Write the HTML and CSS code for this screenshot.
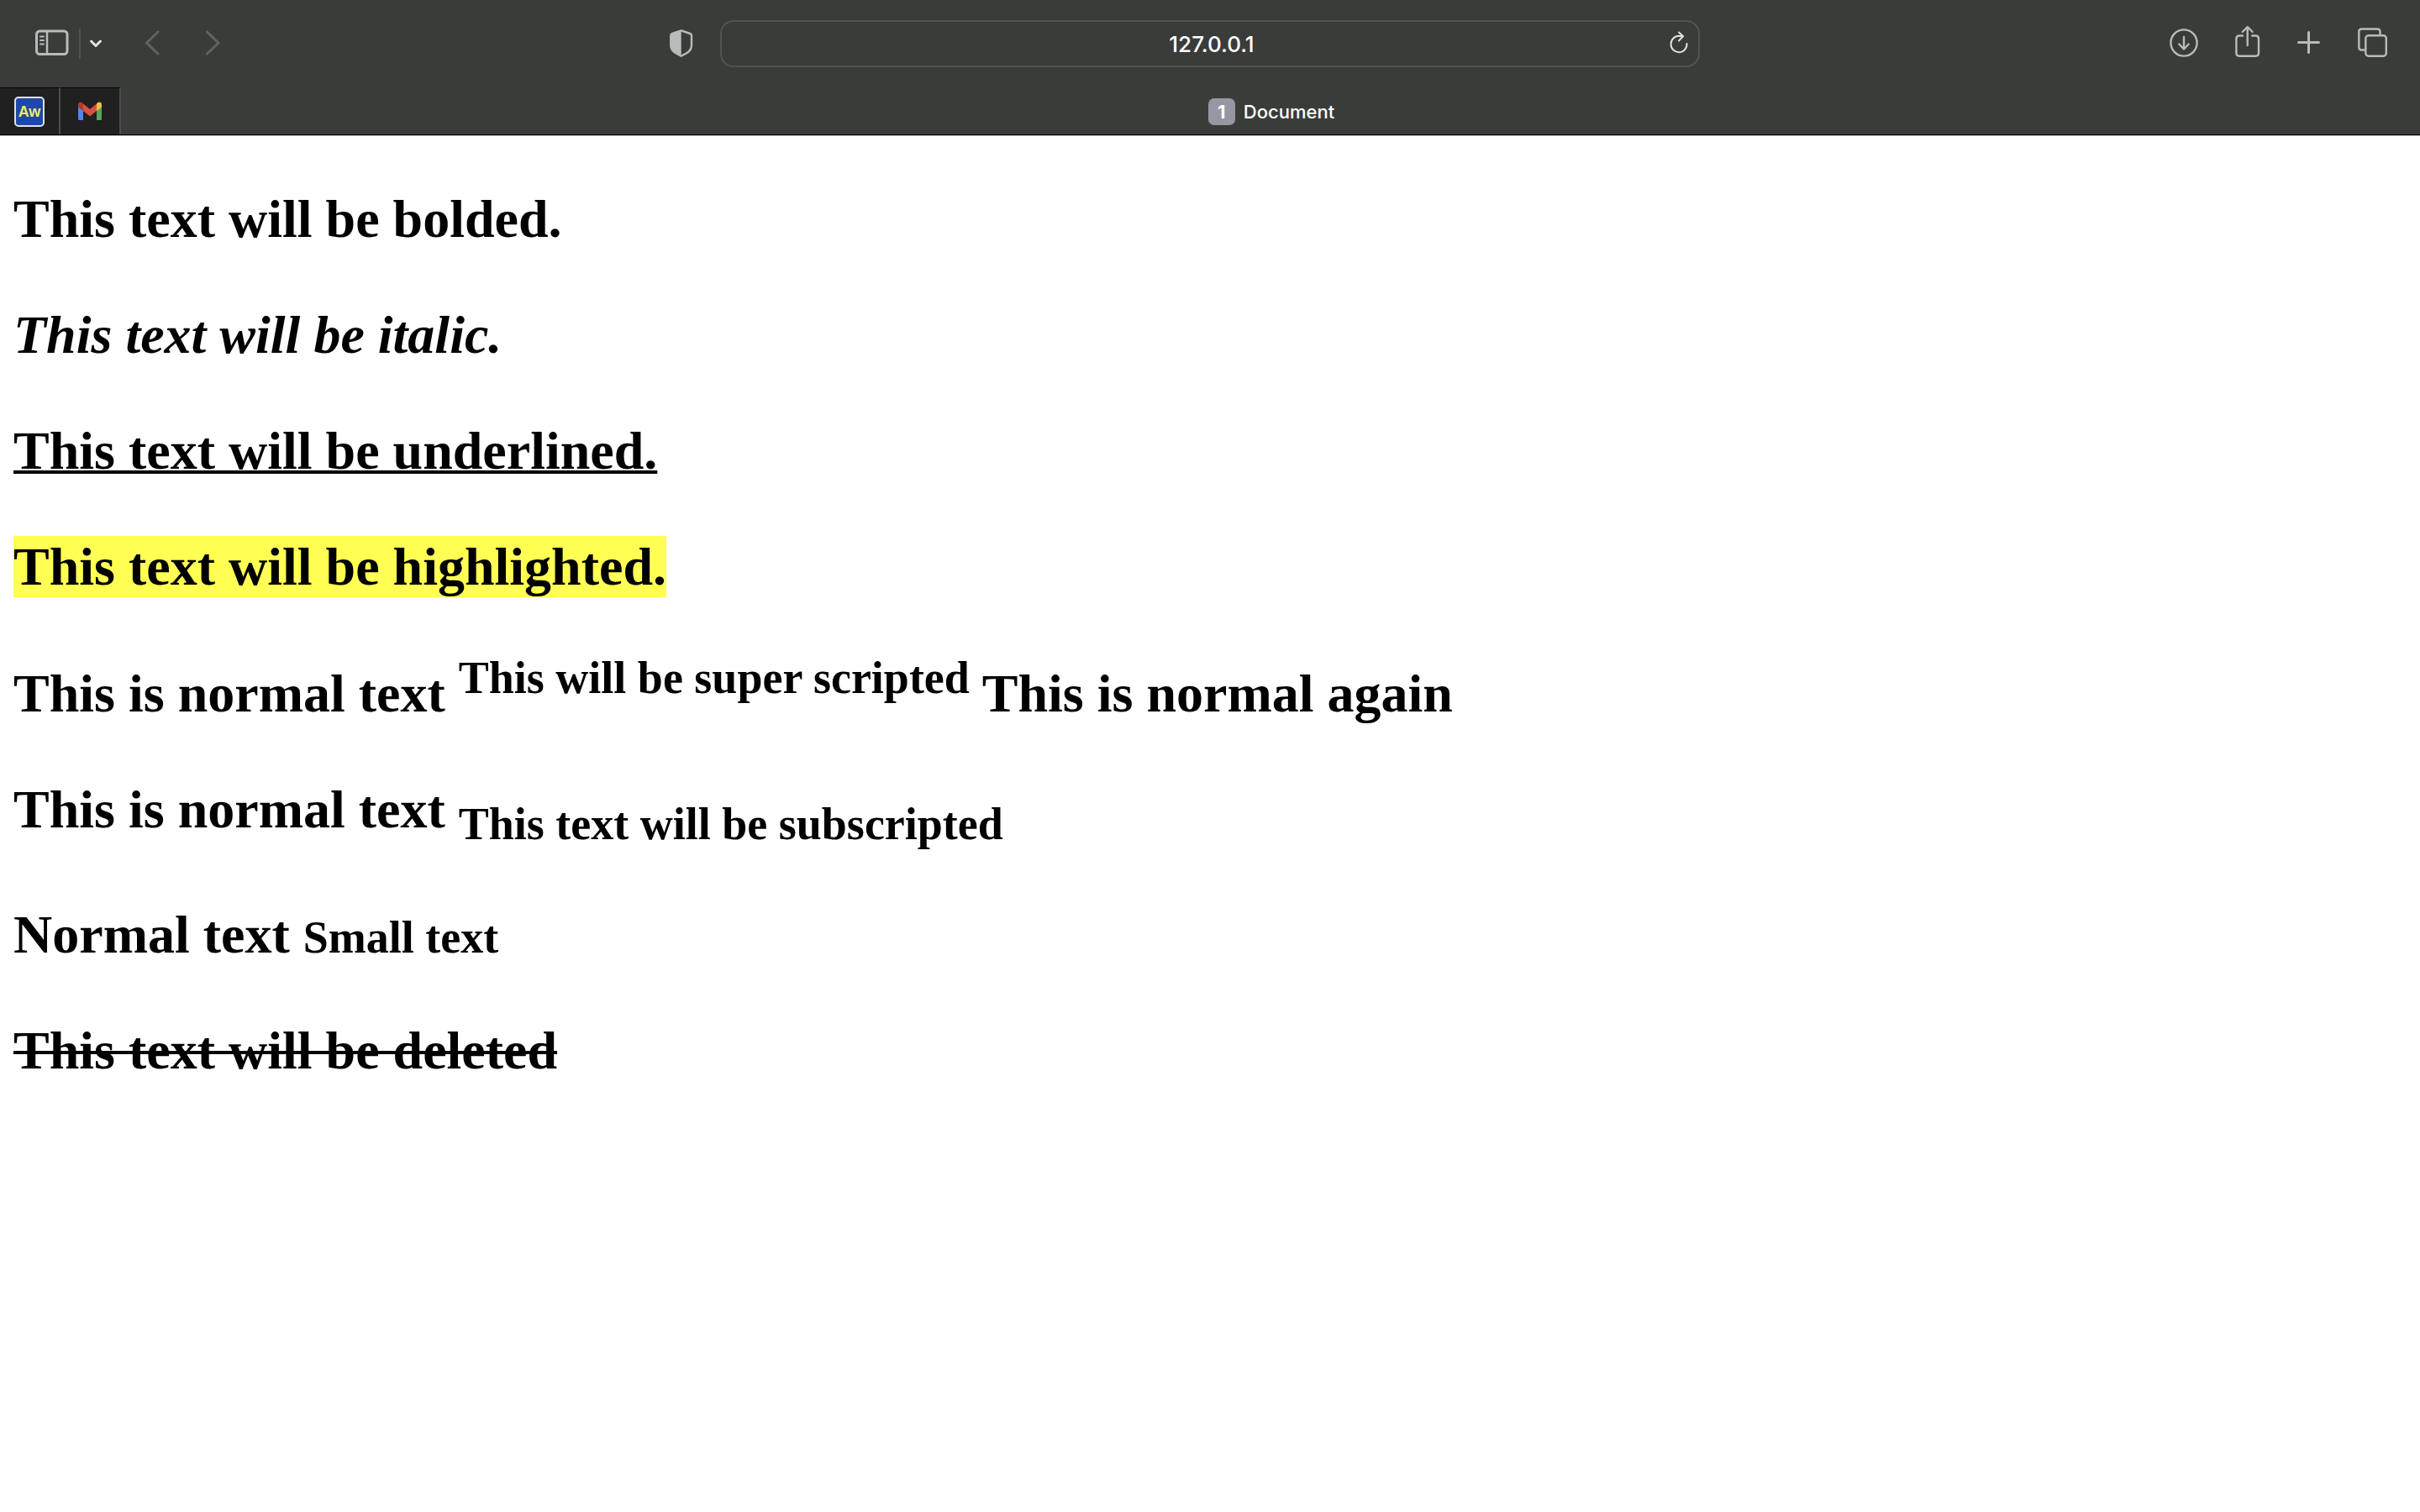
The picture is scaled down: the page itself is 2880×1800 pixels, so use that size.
FILE: index.html
```html
<!DOCTYPE html>
<html lang="en">
<head>
<meta charset="utf-8">
<title>Document</title>
<link rel="stylesheet" href="styles.css">
</head>
<body>
<header class="browser">
  <div class="toolbar">
    <div class="tools tools-left">
      <button class="tool" aria-label="Show sidebar">
        <svg width="40" height="44" fill="none" stroke="currentColor" stroke-width="3"><rect x="1.500" y="7" width="36.500" height="27.500" rx="4"/><path d="M14 7v27" stroke-width="2.500"/><path d="M6 13.500h4M6 18h4M6 22.500h4" stroke-width="2" stroke-linecap="round"/></svg>
      </button>
      <span class="divider"></span>
      <button class="tool tool-bright" aria-label="Tab groups">
        <svg width="16" height="44" fill="none" stroke="currentColor" stroke-width="3" stroke-linecap="round" stroke-linejoin="round"><path d="M2.500 19l5.500 5.500 5.500-5.500"/></svg>
      </button>
      <button class="tool tool-dim tool-back" aria-label="Back">
        <svg width="18" height="44" fill="none" stroke="currentColor" stroke-width="3" stroke-linecap="round" stroke-linejoin="round"><path d="M16 8L2.500 21 16 34"/></svg>
      </button>
      <button class="tool tool-dim tool-forward" aria-label="Forward">
        <svg width="18" height="44" fill="none" stroke="currentColor" stroke-width="3" stroke-linecap="round" stroke-linejoin="round"><path d="M2.500 8L16 21 2.500 34"/></svg>
      </button>
      <button class="tool tool-shield" aria-label="Privacy report">
        <svg width="28" height="44" fill="none" stroke="currentColor" stroke-width="2.400" stroke-linejoin="round"><path d="M13.700 6.300L24.300 10Q26 10.600 26 12.500V24Q26 29.500 20.500 33 L13.700 36.800 6.800 33Q1.300 29.500 1.300 24V12.500Q1.300 10.600 3 10Z"/><path d="M13.700 6.300V36.800L6.800 33Q1.300 29.500 1.300 24V12.500Q1.300 10.600 3 10Z" fill="currentColor" stroke="none"/></svg>
      </button>
    </div>
    <div class="address">
      <input class="address-input" type="text" aria-label="Address" value="127.0.0.1">
      <button class="tool reload" aria-label="Reload">
        <svg width="24" height="44" fill="none" stroke="currentColor" stroke-width="2" stroke-linecap="round" stroke-linejoin="round"><path d="M20.500 22A9.500 9.700 0 1 1 11 12.800L16 13.200"/><path d="M11 8.500L16 13.200 11 18.500"/></svg>
      </button>
    </div>
    <div class="tools tools-right">
      <button class="tool" aria-label="Downloads">
        <svg width="34" height="44" fill="none" stroke="currentColor" stroke-width="2.400" stroke-linecap="round" stroke-linejoin="round"><circle cx="17" cy="21" r="15.600"/><path d="M17 14v14M11.300 22.500l5.700 6 5.700-6"/></svg>
      </button>
      <button class="tool" aria-label="Share">
        <svg width="30" height="44" fill="none" stroke="currentColor" stroke-width="2.400" stroke-linecap="round" stroke-linejoin="round"><path d="M9 12.500H5Q1.400 12.500 1.400 16V33Q1.400 36.700 5 36.700H24.300Q28 36.700 28 33V16Q28 12.500 24.300 12.500H20.300"/><path d="M14.700 24V3M8.700 8l6-6 6 6"/></svg>
      </button>
      <button class="tool" aria-label="New tab">
        <svg width="28" height="44" fill="none" stroke="currentColor" stroke-width="3" stroke-linecap="round"><path d="M1.500 20.500h24M13.500 8.500v24"/></svg>
      </button>
      <button class="tool" aria-label="Show all tabs">
        <svg width="36" height="44" fill="none" stroke="currentColor" stroke-width="2.400" stroke-linejoin="round"><path d="M8 29.500H4.500Q1.300 29.500 1.300 26.300V7.800Q1.300 4.500 4.500 4.500H23.300Q26.500 4.500 26.500 7.800V11.500"/><rect x="9.300" y="12.300" width="24.500" height="24.500" rx="3.500"/></svg>
      </button>
    </div>
  </div>
  <nav class="tabs" aria-label="Tabs">
    <button class="pinned" aria-label="Aw">
      <span class="favicon">Aw</span>
    </button>
    <button class="pinned" aria-label="Gmail">
      <svg width="30" height="24"><path d="M1 5v15.500Q1 22 2.500 22H7V8z" fill="#5086ec"/><path d="M23 8v14h4.500Q29 22 29 20.500V5z" fill="#58a65c"/><path d="M7 2.500l8 6.500 8-6.500V11l-8 6.500L7 11z" fill="#d85140"/><path d="M1 7V4Q1 .500 4 .500 5.500.500 7 2.500V11L1 6.500z" fill="#b3372b"/><path d="M23 11V2.500Q24.500.500 26 .500 29 .500 29 4V6.500z" fill="#f2bf42"/></svg>
    </button>
    <button class="tab"><span class="tab-badge">1</span>Document</button>
  </nav>
</header>
<main class="page">
  <p><b>This text will be bolded.</b></p>
  <p><i>This text will be italic.</i></p>
  <p><u>This text will be underlined.</u></p>
  <p><mark>This text will be highlighted.</mark></p>
  <p>This is normal text <sup>This will be super scripted</sup> This is normal again</p>
  <p>This is normal text <sub>This text will be subscripted</sub></p>
  <p>Normal text <small>Small text</small></p>
  <p><del>This text will be deleted</del></p>
</main>
</body>
</html>
```
FILE: styles.css
```css
* {
  box-sizing: border-box;
}

body {
  margin: 0;
  background: #fff;
  color: #000;
}

button,
input {
  margin: 0;
  padding: 0;
  border: 0;
  background: none;
  color: inherit;
  font: inherit;
}

svg {
  display: block;
}

.browser {
  background: #3a3c3a;
  border-bottom: 1px solid #b4b4b4;
  color: #fff;
  font-family: Inter, "Liberation Sans", sans-serif;
}

.toolbar {
  display: grid;
  grid-template-columns: 1fr 1166px 1fr;
  align-items: center;
  height: 104px;
}

.tools {
  display: flex;
  align-items: center;
}

.tools-left {
  padding: 0 32px 0 42px;
}

.tools-right {
  justify-content: flex-end;
  gap: 44px;
  padding-right: 38px;
}

.tool {
  flex: none;
  color: #b9bbba;
}

.tool-bright {
  color: #e4e4e4;
}

.tool-dim {
  color: #616261;
}

.divider {
  width: 2px;
  height: 36px;
  margin: 0 10px 0 12px;
  background: #505150;
}

.tool-back {
  margin-left: 50px;
}

.tool-forward {
  margin-left: 54px;
}

.tool-shield {
  margin-left: auto;
}

.address {
  display: flex;
  align-items: center;
  height: 56px;
  padding: 0 10px;
  border: 2px solid #525352;
  border-radius: 16px;
}

.address-input {
  flex: 1;
  min-width: 0;
  padding: 2px 0 0 28px;
  font-size: 26px;
  font-weight: 500;
  line-height: 32px;
  text-align: center;
}

.reload {
  color: #dedfde;
}

.tabs {
  display: flex;
  height: 57px;
  border-bottom: 1px solid #000;
}

.pinned {
  display: flex;
  align-items: center;
  justify-content: center;
  width: 72px;
  border-top: 1px solid #000;
  border-right: 2px solid #4b4c4b;
  background: #202020;
}

.favicon {
  width: 36px;
  height: 36px;
  border: 2px solid #dfe1e4;
  border-radius: 5px;
  background: #1d48a8;
  color: #f5ea61;
  font-family: "Liberation Sans", sans-serif;
  font-size: 18px;
  font-weight: 700;
  line-height: 32px;
}

.tab {
  display: flex;
  flex: 1;
  align-items: center;
  justify-content: center;
  gap: 10px;
  padding: 2px 0 0 2px;
  font-size: 22px;
  font-weight: 500;
}

.tab-badge {
  width: 32px;
  height: 32px;
  border-radius: 7px;
  background: #9796a3;
  font-weight: 700;
  line-height: 32px;
}

.page {
  padding: 62px 16px;
  font-family: "Liberation Serif", serif;
  font-size: 64px;
  font-weight: 700;
}

.page p {
  margin: 0 0 64px;
}

.page u,
.page del {
  text-decoration-thickness: 4px;
  text-decoration-skip-ink: none;
}

.page mark {
  padding: 1px 0;
  background: #ffff54;
}

.page sup,
.page sub,
.page small {
  font-size: 54px;
}
```
